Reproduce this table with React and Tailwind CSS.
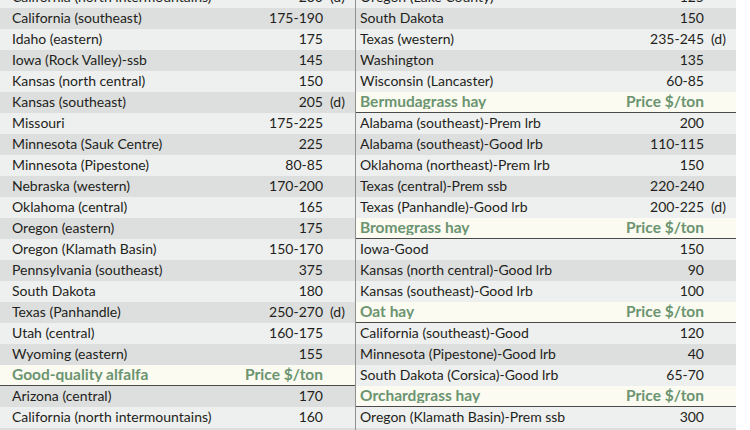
import React from 'react';

// each entry: [label, price, note, tone] or { header }
const leftRows = [
  ['California (north intermountains)', '230', '(d)', 'light'],
  ['California (southeast)', '175-190', '', 'dark'],
  ['Idaho (eastern)', '175', '', 'light'],
  ['Iowa (Rock Valley)-ssb', '145', '', 'dark'],
  ['Kansas (north central)', '150', '', 'light'],
  ['Kansas (southeast)', '205', '(d)', 'dark'],
  ['Missouri', '175-225', '', 'light'],
  ['Minnesota (Sauk Centre)', '225', '', 'dark'],
  ['Minnesota (Pipestone)', '80-85', '', 'light'],
  ['Nebraska (western)', '170-200', '', 'dark'],
  ['Oklahoma (central)', '165', '', 'light'],
  ['Oregon (eastern)', '175', '', 'dark'],
  ['Oregon (Klamath Basin)', '150-170', '', 'light'],
  ['Pennsylvania (southeast)', '375', '', 'dark'],
  ['South Dakota', '180', '', 'light'],
  ['Texas (Panhandle)', '250-270', '(d)', 'dark'],
  ['Utah (central)', '160-175', '', 'light'],
  ['Wyoming (eastern)', '155', '', 'dark'],
  { header: 'Good-quality alfalfa' },
  ['Arizona (central)', '170', '', 'dark'],
  ['California (north intermountains)', '160', '', 'light'],
  ['California (southeast)', '145-160', '', 'dark'],
];

const rightRows = [
  ['Oregon (Lake County)', '125', '', 'light'],
  ['South Dakota', '150', '', 'dark'],
  ['Texas (western)', '235-245', '(d)', 'light'],
  ['Washington', '135', '', 'dark'],
  ['Wisconsin (Lancaster)', '60-85', '', 'light'],
  { header: 'Bermudagrass hay' },
  ['Alabama (southeast)-Prem lrb', '200', '', 'light'],
  ['Alabama (southeast)-Good lrb', '110-115', '', 'dark'],
  ['Oklahoma (northeast)-Prem lrb', '150', '', 'light'],
  ['Texas (central)-Prem ssb', '220-240', '', 'dark'],
  ['Texas (Panhandle)-Good lrb', '200-225', '(d)', 'light'],
  { header: 'Bromegrass hay' },
  ['Iowa-Good', '150', '', 'light'],
  ['Kansas (north central)-Good lrb', '90', '', 'dark'],
  ['Kansas (southeast)-Good lrb', '100', '', 'light'],
  { header: 'Oat hay' },
  ['California (southeast)-Good', '120', '', 'light'],
  ['Minnesota (Pipestone)-Good lrb', '40', '', 'dark'],
  ['South Dakota (Corsica)-Good lrb', '65-70', '', 'light'],
  { header: 'Orchardgrass hay' },
  ['Oregon (Klamath Basin)-Prem ssb', '300', '', 'light'],
  ['Oregon (Klamath Basin)-Good ssb', '200', '', 'dark'],
];

function Row({ row, padLeft }) {
  if (row.header) {
    return (
      <div className={`flex h-[21px] items-center border-b border-[#4a4a4a] bg-[#fbfbf2] pb-[1px] text-[15.5px] font-bold text-[#6b9470] ${padLeft}`}>
        <span className="flex-1 truncate">{row.header}</span>
        <span>Price $/ton</span>
        <span className="w-[32px]" />
      </div>
    );
  }
  const [label, price, note, tone] = row;
  return (
    <div className={`flex h-[21px] items-center pb-[2px] ${tone === 'dark' ? 'bg-[#dddede]' : 'bg-[#eeefef]'} ${padLeft}`}>
      <span className="flex-1 truncate">{label}</span>
      <span>{price}</span>
      <span className="w-[32px] pl-[7px]">{note}</span>
    </div>
  );
}

export default function App() {
  return (
    <div className="h-[430px] w-[750px] overflow-hidden bg-white font-['Lato',sans-serif] text-[14px] leading-none text-[#231f20]">
      <div className="-mt-[13px] flex w-[736px]">
        <div className="w-[355px]">
          {leftRows.map((r, i) => (
            <Row key={i} row={r} padLeft="pl-[12px]" />
          ))}
        </div>
        <div className="w-px bg-[#8f8f8f]" />
        <div className="flex-1">
          {rightRows.map((r, i) => (
            <Row key={i} row={r} padLeft="pl-[4px]" />
          ))}
        </div>
      </div>
    </div>
  );
}
